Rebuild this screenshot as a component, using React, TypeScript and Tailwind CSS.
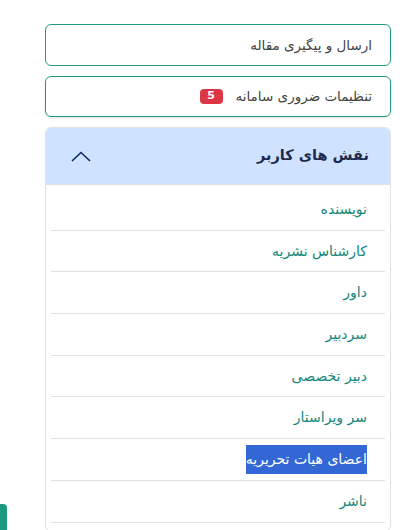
import React from 'react';

const roles = [
  'نویسنده',
  'کارشناس نشریه',
  'داور',
  'سردبیر',
  'دبیر تخصصی',
  'سر ویراستار',
  'اعضای هیات تحریریه',
  'ناشر',
];

export default function App() {
  return (
    <div
      dir="rtl"
      className="relative w-[414px] h-[530px] overflow-hidden bg-white"
      style={{ fontFamily: '"DejaVu Sans", "Noto Sans", sans-serif' }}
    >
      <div className="mr-[23px] ml-[45px] pt-[24px] flex flex-col gap-[10px]">
        {/* Top links */}
        <div className="h-[42px] rounded-md border border-[#1f9a7f] flex items-center pr-[18px] text-[13.5px] text-[#444]">
          ارسال و پیگیری مقاله
        </div>
        <div className="h-[41px] rounded-md border border-[#1f9a7f] shadow-sm flex items-center gap-[13px] pr-[18px] text-[13.5px] text-[#444]">
          <span>تنظیمات ضروری سامانه</span>
          <span className="bg-[#dc3545] text-white text-[11px] font-bold rounded-[4px] w-[23px] h-[15px] flex items-center justify-center">
            5
          </span>
        </div>

        {/* Roles accordion */}
        <div className="rounded-md border border-[#dee2e6] overflow-hidden">
          <div className="h-[57px] bg-[#cfe2ff] flex items-center justify-between pr-[21px] pl-[25px] border-b border-[#dee2e6]">
            <span className="text-[14.5px] font-bold text-[#1b2a4e]">نقش های کاربر</span>
            <svg width="20" height="11" viewBox="0 0 20 11" fill="none">
              <path d="M1 10 L10 1.5 L19 10" stroke="#0b2a5c" strokeWidth="1.6" />
            </svg>
          </div>
          <div className="px-[5px] pt-[4px] pb-[8px]">
            {roles.map((r) => (
              <div key={r} className="h-[41.7px] flex items-center border-b border-[#dee2e6] pr-[18px] text-[14px] text-[#13877a]">
                {r === 'اعضای هیات تحریریه' ? (
                  <span className="bg-[#3367d6] text-white h-[29px] flex items-center">{r}</span>
                ) : (
                  r
                )}
              </div>
            ))}
          </div>
        </div>
      </div>

      {/* floating button edge */}
      <div className="absolute left-0 top-[504px] w-[7px] h-[40px] bg-[#1b9a80] rounded-r-[4px]" />
    </div>
  );
}
